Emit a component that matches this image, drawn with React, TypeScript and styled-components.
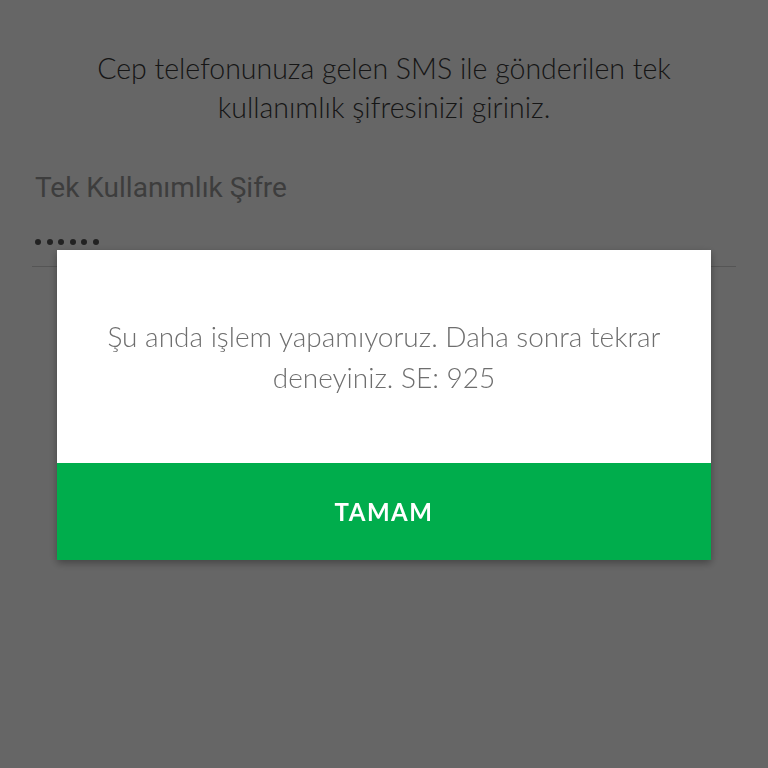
import React from 'react';
import styled, { createGlobalStyle } from 'styled-components';

const GlobalStyle = createGlobalStyle`
  html, body {
    margin: 0;
    padding: 0;
    background: #ffffff;
  }
  body {
    font-family: Lato, "Noto Sans", sans-serif;
  }
`;

const Page = styled.div`
  width: 768px;
  height: 768px;
  background: #ffffff;
  padding-top: 49px;
  box-sizing: border-box;
`;

const Intro = styled.p`
  margin: 0 auto;
  font-family: Lato, "Noto Sans", sans-serif;
  font-weight: 300;
  font-size: 28.5px;
  line-height: 39px;
  color: #383838;
  text-align: center;
`;

const Field = styled.div`
  margin: 44px 32px 0;
  display: flex;
  flex-direction: column;
`;

const Label = styled.label`
  font-family: Roboto, "Noto Sans", sans-serif;
  font-size: 28px;
  line-height: 34px;
  color: #9a9a9a;
  padding-left: 3px;
`;

const Dots = styled.div`
  display: flex;
  gap: 5.5px;
  padding: 34px 0 0 3px;
  height: 6px;
`;

const Dot = styled.span`
  width: 6px;
  height: 6px;
  border-radius: 50%;
  background: #555555;
`;

const Underline = styled.div`
  margin-top: 21px;
  height: 1px;
  background: #d4d4d4;
`;

const Overlay = styled.div`
  position: fixed;
  inset: 0;
  background: rgba(0, 0, 0, 0.6);
  display: flex;
  justify-content: center;
  align-items: flex-start;
  padding-top: 250px;
  box-sizing: border-box;
`;

const Dialog = styled.div`
  width: 654px;
  background: #ffffff;
  display: flex;
  flex-direction: column;
  box-shadow: 0 3px 8px rgba(0, 0, 0, 0.35);
`;

const Message = styled.div`
  height: 213px;
  display: flex;
  align-items: center;
  justify-content: center;
  text-align: center;
  font-family: Lato, "Noto Sans", sans-serif;
  font-weight: 300;
  font-size: 28px;
  line-height: 41px;
  color: #6e6e6e;
  padding: 0 20px;
  box-sizing: border-box;
`;

const OkButton = styled.button`
  height: 97px;
  border: none;
  margin: 0;
  background: #00ad4c;
  color: #ffffff;
  font-family: Lato, "Noto Sans", sans-serif;
  font-weight: 700;
  font-size: 24px;
  letter-spacing: 1.5px;
  cursor: pointer;
`;

export default function App() {
  return (
    <>
      <GlobalStyle />
      <Page>
        <Intro>
          Cep telefonunuza gelen SMS ile gönderilen tek
          <br />
          kullanımlık şifresinizi giriniz.
        </Intro>
        <Field>
          <Label>Tek Kullanımlık Şifre</Label>
          <Dots>
            {Array.from({ length: 6 }).map((_, i) => (
              <Dot key={i} />
            ))}
          </Dots>
          <Underline />
        </Field>
      </Page>
      <Overlay>
        <Dialog>
          <Message>
            Şu anda işlem yapamıyoruz. Daha sonra tekrar
            <br />
            deneyiniz. SE: 925
          </Message>
          <OkButton>TAMAM</OkButton>
        </Dialog>
      </Overlay>
    </>
  );
}
